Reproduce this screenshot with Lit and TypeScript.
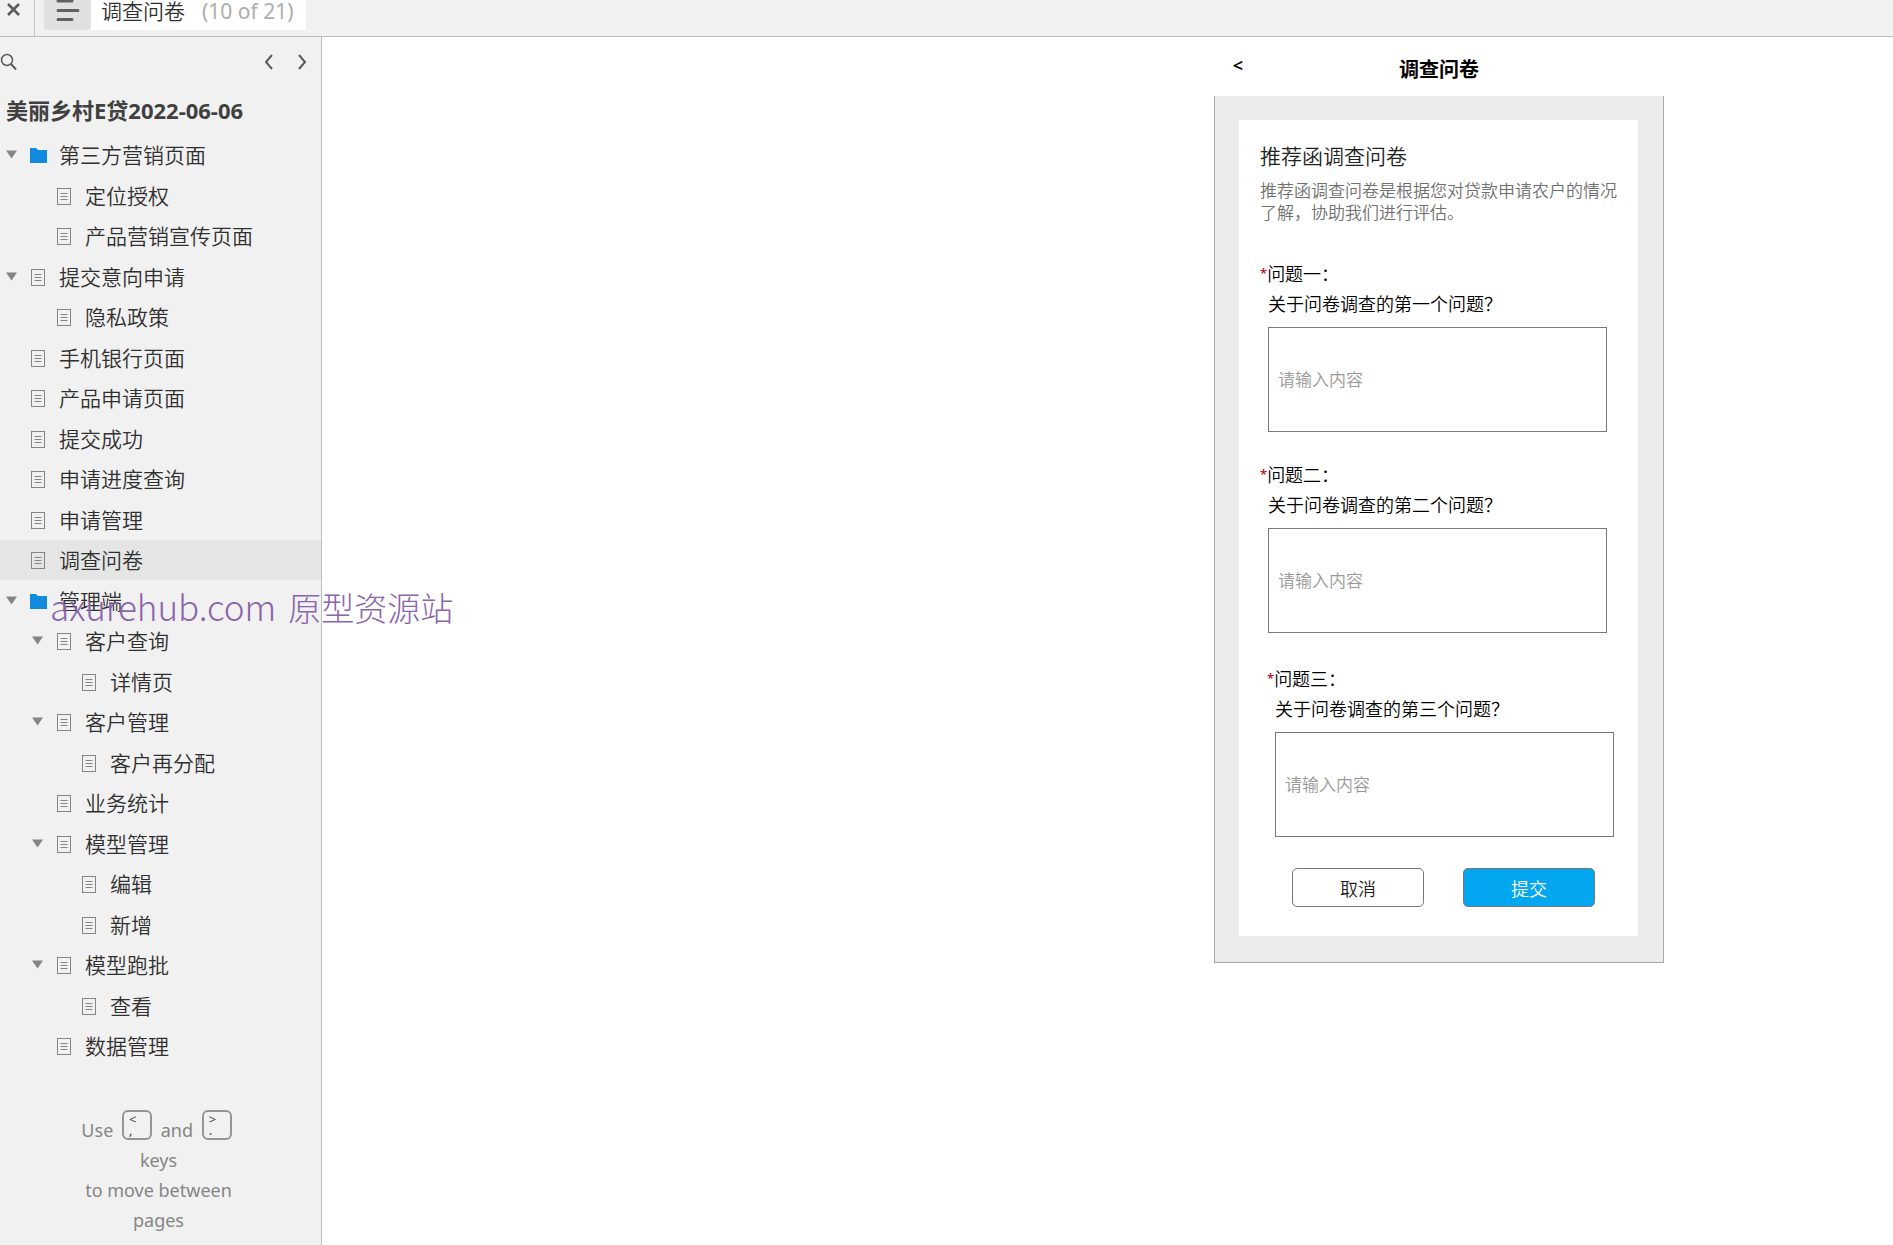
import { LitElement, html, css, svg, nothing } from "lit";
import { customElement, state } from "lit/decorators.js";

interface Page {
  name: string;
  level: number;
  folder?: boolean;
  open?: boolean;
}

interface Question {
  id: string;
  title: string;
  text: string;
  indented?: boolean;
}

const PAGES: Page[] = [
  { name: "第三方营销页面", level: 0, folder: true, open: true },
  { name: "定位授权", level: 1 },
  { name: "产品营销宣传页面", level: 1 },
  { name: "提交意向申请", level: 0, open: true },
  { name: "隐私政策", level: 1 },
  { name: "手机银行页面", level: 0 },
  { name: "产品申请页面", level: 0 },
  { name: "提交成功", level: 0 },
  { name: "申请进度查询", level: 0 },
  { name: "申请管理", level: 0 },
  { name: "调查问卷", level: 0 },
  { name: "管理端", level: 0, folder: true, open: true },
  { name: "客户查询", level: 1, open: true },
  { name: "详情页", level: 2 },
  { name: "客户管理", level: 1, open: true },
  { name: "客户再分配", level: 2 },
  { name: "业务统计", level: 1 },
  { name: "模型管理", level: 1, open: true },
  { name: "编辑", level: 2 },
  { name: "新增", level: 2 },
  { name: "模型跑批", level: 1, open: true },
  { name: "查看", level: 2 },
  { name: "数据管理", level: 1 },
];

const QUESTIONS: Question[] = [
  { id: "q1", title: "问题一：", text: "关于问卷调查的第一个问题？" },
  { id: "q2", title: "问题二：", text: "关于问卷调查的第二个问题？" },
  { id: "q3", title: "问题三：", text: "关于问卷调查的第三个问题？", indented: true },
];

const baseStyles = css`
  * {
    box-sizing: border-box;
  }
  button,
  input {
    font: inherit;
    color: inherit;
  }
  svg {
    display: block;
    flex: none;
  }
`;

@customElement("site-toolbar")
export class SiteToolbar extends LitElement {
  static styles = [
    baseStyles,
    css`
      :host {
        display: block;
      }
      .bar {
        display: flex;
        align-items: flex-start;
        height: 37px;
        background: #f1f1f1;
        border-bottom: 1px solid #bebebe;
        font-size: 21px;
      }
      button {
        border: 0;
        padding: 0;
        background: none;
      }
      .close {
        width: 35px;
        height: 36px;
        padding: 2px 0 0 6px;
        border-right: 1px solid #c2c2c2;
        display: flex;
      }
      .menu {
        width: 47px;
        height: 30px;
        margin-left: 9px;
        padding-left: 12px;
        background: #e0e0e0;
        border-radius: 0 0 4px 4px;
      }
      .page {
        display: flex;
        gap: 17px;
        height: 30px;
        padding: 0 12px 0 10px;
        background: #fff;
        color: #303030;
        line-height: 22px;
        white-space: nowrap;
      }
      .count {
        color: #adadad;
        font-weight: 400;
      }
    `,
  ];

  render() {
    return html`
      <header class="bar">
        <button class="close" aria-label="Close">
          <svg width="16" height="16" viewBox="0 0 16 16" stroke="#5a5a5a" stroke-width="2.500">
            <path d="M2 2 L13 13 M13 2 L2 13" />
          </svg>
        </button>
        <button class="menu" aria-label="Pages">
          <svg width="24" height="30" viewBox="0 0 24 30" stroke="#606060" stroke-width="3" stroke-linecap="round">
            <path d="M2 1 H16 M2 10.500 H22 M2 19.500 H16" />
          </svg>
        </button>
        <div class="page"><span>调查问卷</span><span class="count">(10 of 21)</span></div>
      </header>
    `;
  }
}

@customElement("site-map")
export class SiteMap extends LitElement {
  @state() private current = "调查问卷";

  static styles = [
    baseStyles,
    css`
      :host {
        display: flex;
        flex-direction: column;
        width: 322px;
        flex: none;
        background: #f1f1f1;
        border-right: 1px solid #bebebe;
        color: #303030;
        font-size: 21px;
      }
      button {
        border: 0;
        padding: 0;
        background: none;
      }
      .tools {
        display: flex;
        align-items: center;
        height: 49px;
        padding-right: 3px;
      }
      .search {
        margin-right: auto;
      }
      .step {
        width: 33px;
        display: flex;
        justify-content: center;
      }
      .project {
        margin: 0;
        padding-left: 6px;
        height: 49px;
        line-height: 48px;
        font-size: 22px;
        font-weight: 700;
        color: #404040;
        white-space: nowrap;
      }
      .tree {
        list-style: none;
        margin: 0;
        padding: 0;
      }
      .row {
        display: flex;
        align-items: center;
        height: 40px;
      }
      .row:nth-child(even) {
        height: 41px;
      }
      .level-1 {
        padding-left: 26px;
      }
      .level-2 {
        padding-left: 51px;
      }
      .selected {
        background: #e5e5e5;
      }
      .toggle {
        width: 29px;
        height: 20px;
        padding-left: 6px;
        flex: none;
      }
      .link {
        display: flex;
        align-items: center;
        gap: 12px;
        color: inherit;
        text-decoration: none;
        line-height: 30px;
        white-space: nowrap;
      }
      .hint {
        margin: 0;
        padding: 44px 80px 0 76px;
        text-align: center;
        font-size: 18px;
        font-weight: 400;
        line-height: 30px;
        color: #858585;
      }
      .key {
        display: inline-flex;
        flex-direction: column;
        width: 30px;
        height: 30px;
        margin: 0 4px;
        padding: 2px 0 0 5px;
        border: 2px solid #959595;
        border-radius: 6px;
        font: inherit;
        font-size: 13px;
        line-height: 11px;
        text-align: left;
        color: #404040;
        vertical-align: 13px;
      }
    `,
  ];

  private icon(folder?: boolean) {
    return folder
      ? html`<svg width="18" height="18" viewBox="0 0 18 18" fill="#128bde">
          <path d="M1 2 H7 L9 4 H18 V17 H1 Z" />
        </svg>`
      : html`<svg width="18" height="18" viewBox="0 0 18 18" fill="none" stroke="#858585">
          <rect x="2.500" y="1.500" width="13" height="16" />
          <path d="M5.500 6.500 H12.500 M5.500 9.500 H12.500 M5.500 12.500 H12.500" />
        </svg>`;
  }

  private chevron(d: string) {
    return html`<svg width="12" height="18" viewBox="0 0 12 18" fill="none" stroke="#5a5a5a" stroke-width="2">
      ${svg`<path d=${d} />`}
    </svg>`;
  }

  render() {
    return html`
      <div class="tools">
        <button class="search" aria-label="Search">
          <svg width="18" height="18" viewBox="0 0 18 18" fill="none" stroke="#5a5a5a" stroke-width="1.500">
            <circle cx="7" cy="7" r="5.500" />
            <path d="M11 11 L16 16.500" stroke-width="2" />
          </svg>
        </button>
        <button class="step" aria-label="Previous page">${this.chevron("M9 2 L3 9 L9 16")}</button>
        <button class="step" aria-label="Next page">${this.chevron("M3 2 L9 9 L3 16")}</button>
      </div>
      <h1 class="project">美丽乡村E贷2022-06-06</h1>
      <ul class="tree">
        ${PAGES.map(
          (p) => html`
            <li class="row level-${p.level} ${p.name === this.current ? "selected" : ""}">
              <span class="toggle">
                ${p.open
                  ? html`<svg width="12" height="20" viewBox="0 0 12 20" fill="#858585">
                      <path d="M0 5.500 H11 L5.500 13.500 Z" />
                    </svg>`
                  : nothing}
              </span>
              <a class="link" href="#" @click=${() => (this.current = p.name)}>${this.icon(p.folder)}${p.name}</a>
            </li>
          `,
        )}
      </ul>
      <p class="hint">
        Use <kbd class="key"><span>&lt;</span><span>,</span></kbd> and
        <kbd class="key"><span>&gt;</span><span>.</span></kbd> keys<br />to move between pages
      </p>
    `;
  }
}

@customElement("survey-form")
export class SurveyForm extends LitElement {
  static styles = [
    baseStyles,
    css`
      :host {
        display: block;
        width: 450px;
        color: #000;
        font-size: 18px;
      }
      .head {
        display: grid;
        grid-template-columns: 48px 1fr 48px;
        height: 59px;
        padding-top: 17px;
      }
      .back {
        border: 0;
        padding: 0;
        height: 22px;
        background: none;
        font-weight: 600;
        line-height: 22px;
      }
      .title {
        margin: 0;
        font-size: 20px;
        line-height: 32px;
        font-weight: 700;
        text-align: center;
      }
      .frame {
        padding: 24px 25px 26px 24px;
        background: #ebebeb;
        border: 1px solid #a9a9a9;
        border-top: 0;
      }
      .card {
        display: block;
        padding: 20px 21px 29px;
        background: #fff;
      }
      .heading {
        margin: 0;
        font-size: 21px;
        line-height: 32px;
        font-weight: inherit;
        color: #222;
      }
      .about {
        margin: 8px 0 35px;
        font-size: 17px;
        line-height: 22px;
        color: #707070;
      }
      .question {
        display: block;
        margin-bottom: 28px;
      }
      .indented {
        margin: 31px -7px 31px 7px;
      }
      .label {
        display: block;
        line-height: 30px;
      }
      .text {
        display: block;
        padding-left: 8px;
      }
      .star {
        color: #c00020;
        font-size: 13px;
        font-weight: 500;
        line-height: 13px;
        vertical-align: 3px;
      }
      .answer {
        display: block;
        width: 339px;
        height: 105px;
        margin: 8px 0 0 8px;
        padding: 0 9px;
        border: 1px solid #797979;
        border-radius: 0;
        background: #fff;
        font-size: 17px;
      }
      .answer::placeholder {
        color: #999;
        opacity: 1;
      }
      .actions {
        display: flex;
        gap: 39px;
        padding-left: 32px;
      }
      .button {
        width: 132px;
        height: 39px;
        padding: 0;
        border: 1px solid #797979;
        border-radius: 5px;
        background: #fff;
        color: #222;
      }
      .primary {
        background: #02a7f0;
        color: #fff;
      }
    `,
  ];

  render() {
    return html`
      <div class="head">
        <button class="back" aria-label="返回">&lt;</button>
        <h2 class="title">调查问卷</h2>
      </div>
      <div class="frame">
        <form class="card" @submit=${(e: Event) => e.preventDefault()}>
          <h3 class="heading">推荐函调查问卷</h3>
          <p class="about">推荐函调查问卷是根据您对贷款申请农户的情况了解，协助我们进行评估。</p>
          ${QUESTIONS.map(
            (q) => html`
              <div class="question ${q.indented ? "indented" : ""}">
                <label class="label" for=${q.id}
                  ><span class="star">*</span>${q.title}<span class="text">${q.text}</span></label
                >
                <input class="answer" id=${q.id} type="text" placeholder="请输入内容" />
              </div>
            `,
          )}
          <div class="actions">
            <button class="button" type="button">取消</button>
            <button class="button primary" type="submit">提交</button>
          </div>
        </form>
      </div>
    `;
  }
}

@customElement("app-root")
export class AppRoot extends LitElement {
  static styles = [
    baseStyles,
    css`
      :host {
        display: flex;
        flex-direction: column;
        position: relative;
        min-height: 100vh;
        background: #fff;
        font-family: "Noto Sans", "Noto Sans CJK SC", sans-serif;
        font-weight: 350;
      }
      .body {
        display: flex;
        flex: 1;
      }
      .canvas {
        flex: 1;
        display: flex;
        justify-content: flex-end;
        align-items: flex-start;
        padding-right: 229px;
      }
      .watermark {
        position: absolute;
        left: 50px;
        top: 582px;
        display: flex;
        align-items: baseline;
        gap: 12px;
        font-family: "Noto Sans CJK SC", sans-serif;
        font-size: 33px;
        line-height: 48px;
        font-weight: 300;
        color: #8a64ac;
        white-space: nowrap;
        pointer-events: none;
      }
      .domain {
        font-size: 35px;
      }
    `,
  ];

  render() {
    return html`
      <site-toolbar></site-toolbar>
      <div class="body">
        <site-map></site-map>
        <main class="canvas"><survey-form></survey-form></main>
      </div>
      <div class="watermark"><span class="domain">axurehub.com</span> <span>原型资源站</span></div>
    `;
  }
}
